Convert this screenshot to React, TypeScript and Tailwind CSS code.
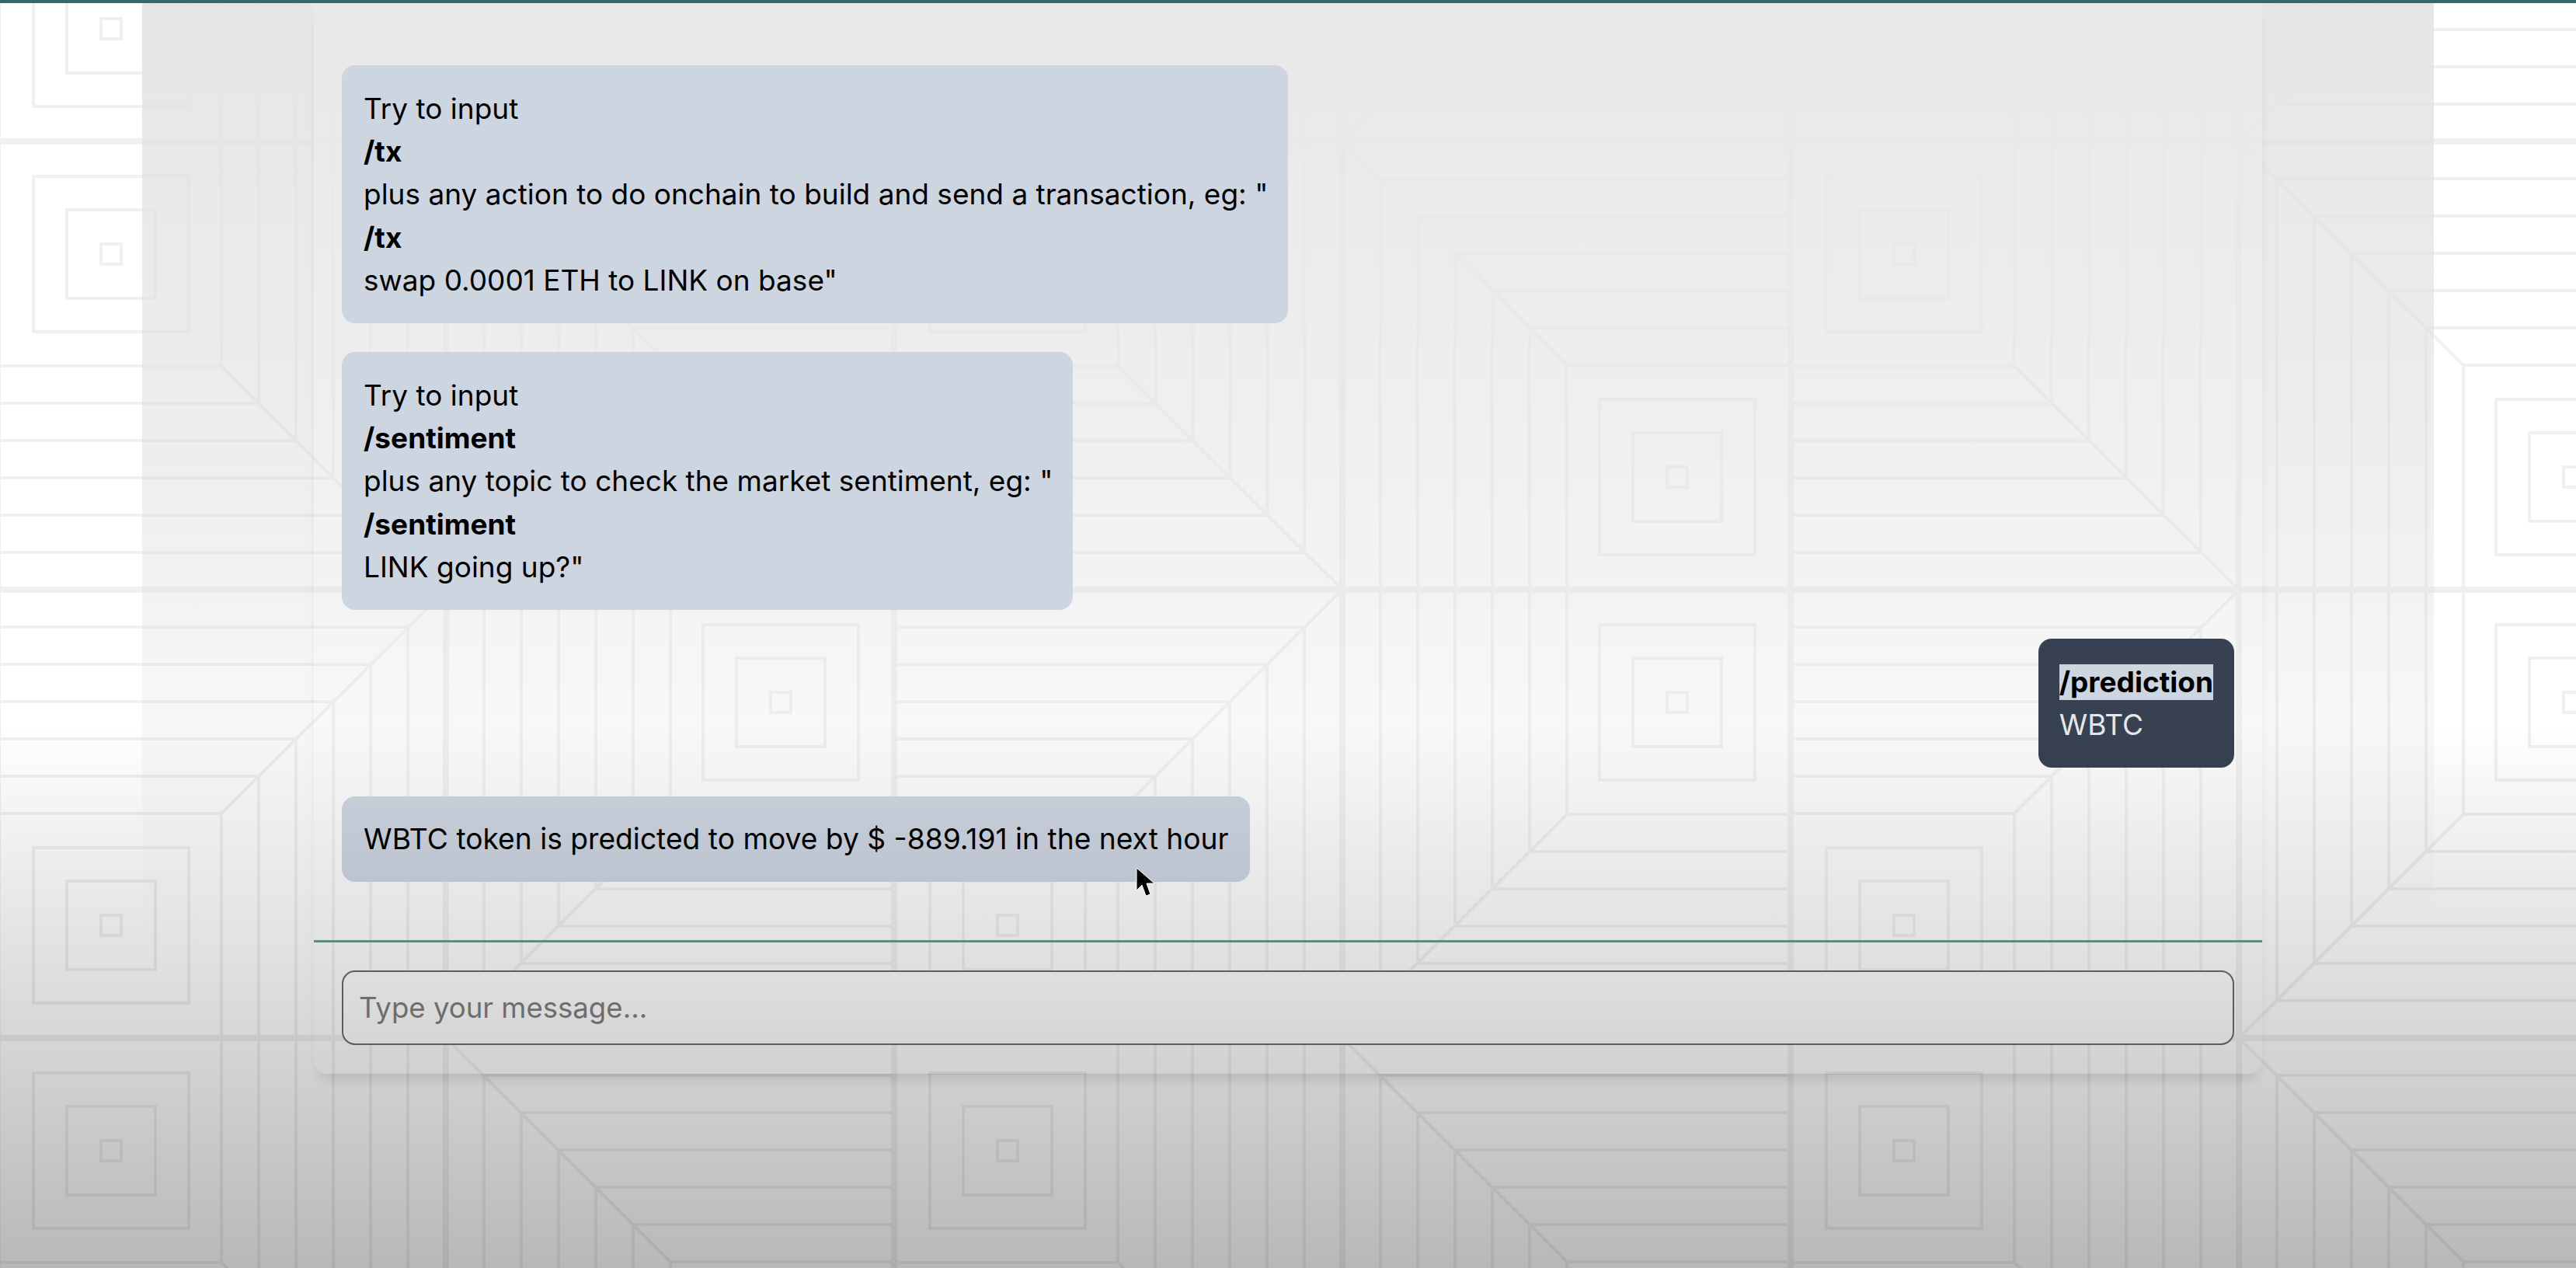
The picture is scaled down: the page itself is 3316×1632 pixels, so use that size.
import React from 'react'

const steps = [1, 2, 3, 4, 5]

const Cell = ({ transform }: { transform: string }) => (
  <g transform={transform}>
    {/* chevrons either side of the diagonal */}
    <path d="M0 288H288V577M288 288L577 0" />
    {steps.map((n) => (
      <path key={n} d={`M0 ${288 - n * 48}H${288 + n * 48}V577`} />
    ))}
    {/* rings */}
    <rect x={46} y={332} width={200} height={200} />
    <rect x={89} y={375} width={114} height={114} />
    <rect x={133} y={419} width={26} height={26} />
  </g>
)

const Background = () => (
  <svg className="absolute inset-0 h-full w-full" xmlns="http://www.w3.org/2000/svg">
    <defs>
      <pattern id="tiles" patternUnits="userSpaceOnUse" x={-3} y={-395} width={1154} height={1154}>
        <g fill="none" stroke="#eef1f0" strokeWidth={4}>
          <Cell transform="" />
          <Cell transform="translate(0 1154) scale(1 -1)" />
          <Cell transform="translate(1154 577) rotate(180)" />
          <Cell transform="translate(1154 577) scale(-1 1)" />
          <path strokeWidth={8} d="M0 0H1154M0 577H1154M0 1154H1154M0 0V1154M577 0V1154M1154 0V1154" />
        </g>
      </pattern>
    </defs>
    <rect width="100%" height="100%" fill="url(#tiles)" />
  </svg>
)

const BotMessage = ({ command, before, after }: { command: string; before: string; after: string }) => (
  <div className="w-fit rounded-[17px] bg-[#cdd5e1] py-[28px] pr-[26px] pl-[28px] text-black">
    <div>Try to input</div>
    <div className="font-bold">{command}</div>
    <div>{before}</div>
    <div className="font-bold">{command}</div>
    <div>{after}</div>
  </div>
)

export default function App() {
  return (
    <div className="relative h-[1632px] w-[3316px] overflow-hidden bg-white font-['Inter',sans-serif] text-[37px] leading-[55.2px]">
      <Background />

      <div className="relative flex h-full flex-col">
        <div className="h-[4px] bg-[#34696b]" />

        <div className="mx-[183px] flex-1 bg-linear-to-b from-[#e4e4e4f0] via-[#dcdcdc80] via-35% to-[#dcdcdc00] to-75% px-[221px]">
          <div className="flex h-[1378px] flex-col rounded-b-[17px] bg-white/10 shadow-[0_14px_18px_-8px_rgba(0,0,0,0.14)]">
            <div className="flex flex-1 flex-col items-start gap-[37px] px-[36px] pt-[80px]">
              <BotMessage
                command="/tx"
                before={'plus any action to do onchain to build and send a transaction, eg: "'}
                after={'swap 0.0001 ETH to LINK on base"'}
              />
              <BotMessage
                command="/sentiment"
                before={'plus any topic to check the market sentiment, eg: "'}
                after={'LINK going up?"'}
              />
              <div className="self-end rounded-[17px] bg-[#374151] px-[27px] py-[28px] text-gray-200">
                <div>
                  <span className="inline-block bg-[#cdd5e1] leading-[46px] font-bold text-black">/prediction</span>
                </div>
                <div>WBTC</div>
              </div>
              <div className="rounded-[17px] bg-[#cdd5e1] py-[27px] pr-[27px] pl-[28px] text-[37.2px] text-black">
                WBTC token is predicted to move by $ -889.191 in the next hour
              </div>
            </div>

            <div className="border-t-[3px] border-[#6c9c90] px-[36px] pt-[36px] pb-[37px]">
              <input
                type="text"
                placeholder="Type your message..."
                className="h-[96px] w-full rounded-[17px] border-2 border-[#6b6b72] bg-white px-[20px] text-[36.6px] outline-none placeholder:text-[#808080]"
              />
            </div>
          </div>
        </div>
      </div>

      {/* fade over the whole frame */}
      <div className="pointer-events-none absolute inset-0 bg-linear-to-b from-transparent from-57% to-[#00000047]" />

      {/* mouse pointer */}
      <svg className="absolute top-[1116px] left-[1462px]" width="26" height="40" viewBox="0 0 26 40">
        <path d="M1 1V30L8 23L13 37L19 35L14 21H24Z" fill="#000" stroke="#fff" strokeWidth="1" />
      </svg>
    </div>
  )
}
